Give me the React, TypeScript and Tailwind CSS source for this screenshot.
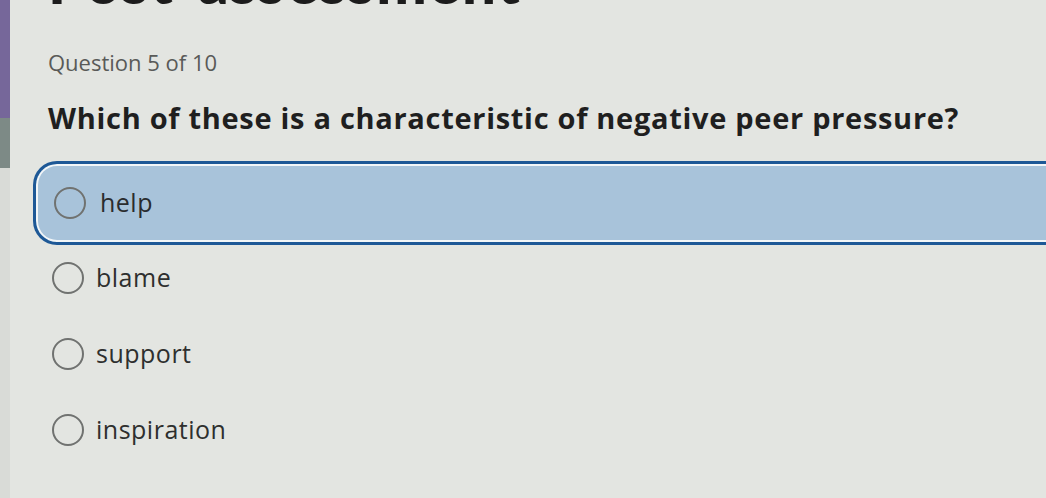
const options = ["help", "blame", "support", "inspiration"];

function Radio() {
  return (
    <span className="block w-[32px] h-[32px] rounded-full border-2 border-[#707270] shrink-0" />
  );
}

export default function App() {
  return (
    <div
      className="w-[1046px] h-[498px] overflow-hidden flex bg-[#e3e5e1]"
      style={{ fontFamily: "'Open Sans', Lato, sans-serif" }}
    >
      {/* left edge of the window behind */}
      <div className="w-[10px] flex flex-col shrink-0">
        <div className="h-[118px] bg-[#76679a]" />
        <div className="h-[50px] bg-[#7d8a86]" />
        <div className="flex-1 bg-[#d9dbd7]" />
      </div>

      <main className="flex-1 pl-[38px] flex flex-col">
        <h1
          className="text-[60px] font-black leading-[46px] h-[46px] -mt-[42px] text-[#1c1c1c] tracking-wide"
          style={{ fontFamily: "Lato, sans-serif" }}
        >
          Post-assessment
        </h1>

        <p className="mt-[44px] text-[22px] leading-[28px] text-[#595a58]">Question 5 of 10</p>

        <h2 className="mt-[24px] text-[29px] font-bold leading-[36px] tracking-[0.7px] text-[#1f1f1f]">
          Which of these is a characteristic of negative peer pressure?
        </h2>

        <div className="mt-[25px] -ml-[15px] -mr-[4px] h-[84px] rounded-l-[24px] border-[3px] border-r-0 border-[#1d5896] bg-[#a8c3da] shadow-[inset_0_0_0_2px_#f2f6f8] flex items-center pl-[18px] gap-[14px]">
          <Radio />
          <span className="text-[25px] tracking-[0.5px] text-[#2a2c2e]">{options[0]}</span>
        </div>

        <div className="mt-[13px] flex flex-col gap-[36px]">
          {options.slice(1).map((o) => (
            <div key={o} className="h-[40px] flex items-center gap-[12px] pl-[4px]">
              <Radio />
              <span className="text-[25px] tracking-[0.5px] text-[#2e2f2e]">{o}</span>
            </div>
          ))}
        </div>
      </main>
    </div>
  );
}
